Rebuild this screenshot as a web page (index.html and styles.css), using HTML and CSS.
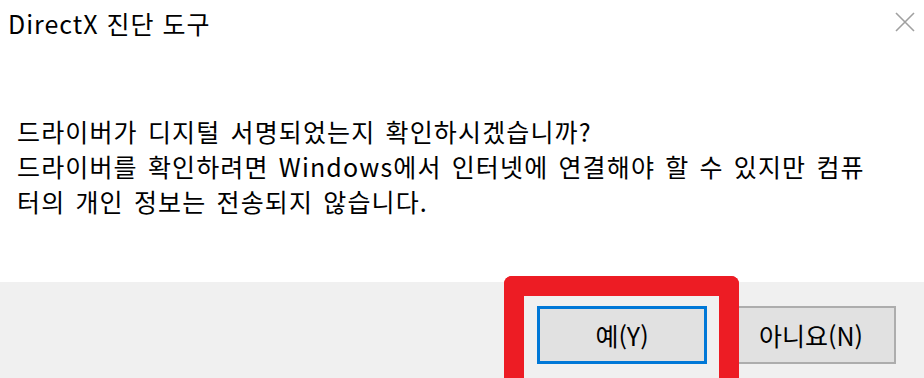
FILE: index.html
```html
<!DOCTYPE html>
<html lang="ko">
<head>
<meta charset="utf-8">
<title>DirectX 진단 도구</title>
<link rel="stylesheet" href="styles.css">
</head>
<body>
<div class="dialog">
  <div class="titlebar">
    <span class="title">DirectX 진단 도구</span>
    <span class="close">
      <svg width="20" height="20" viewBox="0 0 20 20"><path d="M1 1 L19 19 M19 1 L1 19" stroke="#a0a0a0" stroke-width="1.6" fill="none"/></svg>
    </span>
  </div>
  <div class="content">
    <p class="msg">드라이버가 디지털 서명되었는지 확인하시겠습니까?<br>드라이버를 확인하려면 Windows에서 인터넷에 연결해야 할 수 있지만 컴퓨<br>터의 개인 정보는 전송되지 않습니다.</p>
  </div>
  <div class="footer">
    <button class="btn btn-default">예(Y)</button>
    <button class="btn">아니요(N)</button>
    <div class="highlight"></div>
  </div>
</div>
</body>
</html>
```
FILE: styles.css
```css
html, body {
  margin: 0;
  padding: 0;
  background: #ffffff;
}
body {
  width: 924px;
  height: 378px;
  overflow: hidden;
  font-family: "Noto Sans CJK KR", "Noto Sans", sans-serif;
  color: #000000;
}
.dialog {
  display: flex;
  flex-direction: column;
  height: 378px;
}
.titlebar {
  height: 50px;
  display: flex;
  align-items: flex-start;
  justify-content: space-between;
}
.title {
  margin: 6px 0 0 8px;
  font-size: 25px;
  line-height: 34px;
  letter-spacing: 1px;
}
.close {
  margin: 12px 9px 0 0;
  width: 20px;
  height: 20px;
  display: block;
}
.close svg { display: block; }
.content {
  flex: 1;
  padding: 0 0 0 17px;
}
.msg {
  margin: 64px 0 0 0;
  font-size: 25px;
  line-height: 35px;
  letter-spacing: 1.15px;
  word-spacing: 2px;
}
.footer {
  position: relative;
  height: 96px;
  background: #f0f0f0;
  display: flex;
  justify-content: flex-end;
  align-items: flex-start;
  gap: 19px;
  padding: 24px 28px 0 0;
  box-sizing: border-box;
}
.btn {
  width: 170px;
  height: 58px;
  background: #e1e1e1;
  border: 2px solid #adadad;
  font-family: "Noto Sans CJK KR", "Noto Sans", sans-serif;
  font-size: 25px;
  color: #000000;
  padding: 0;
  box-sizing: border-box;
}
.btn-default {
  border: 3px solid #0078d7;
}
.highlight {
  position: absolute;
  left: 504px;
  top: -6px;
  width: 235px;
  height: 120px;
  border: 20px solid #ed1c24;
  border-bottom: none;
  border-radius: 8px 8px 0 0;
  box-sizing: border-box;
}
```
